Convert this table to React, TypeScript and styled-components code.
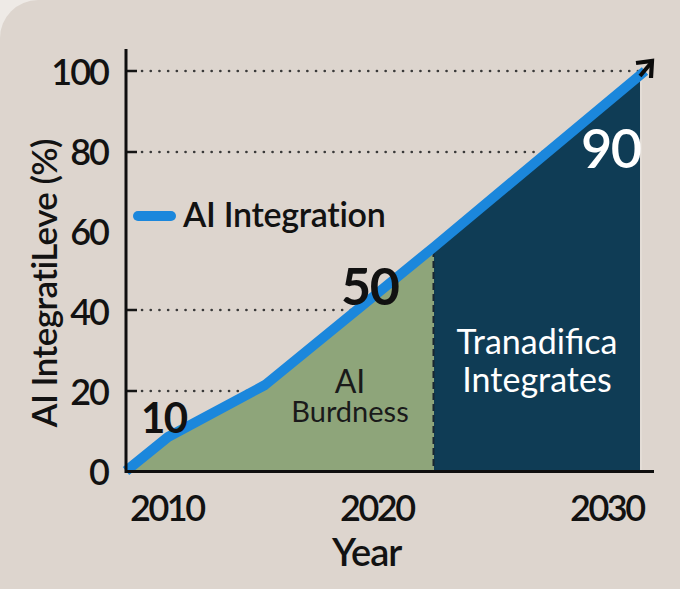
import React from "react";
import styled, { createGlobalStyle } from "styled-components";

const Global = createGlobalStyle`
  html, body { margin: 0; padding: 0; background: #eeeae6; }
  body { font-family: Lato, "Open Sans", Arial, sans-serif; }
  #root { width: 680px; height: 589px; overflow: hidden; }
`;

const Panel = styled.div`
  width: 680px;
  height: 589px;
  background: #ddd5ce;
  border-top-left-radius: 38px;
  padding-top: 40px;
  box-sizing: border-box;
  color: #121212;
  font-family: Lato, "Open Sans", Arial, sans-serif;
`;

const ChartRow = styled.div`
  display: flex;
  height: 449px;
`;

const TitleCol = styled.div`
  width: 54px;
  box-sizing: border-box;
  padding-left: 26px;
  padding-bottom: 62px;
  display: flex;
  align-items: flex-end;
`;

const YTitle = styled.div`
  writing-mode: vertical-rl;
  transform: rotate(180deg);
  font-size: 35px;
  line-height: 35px;
  font-weight: 600;
  letter-spacing: -0.6px;
  white-space: nowrap;
`;

const TickCol = styled.div`
  width: 56px;
  padding-top: 11px;
  margin-right: 16px;
  display: flex;
  flex-direction: column;
  align-items: flex-end;
  gap: 40px;
`;

const Tick = styled.div`
  height: 40px;
  line-height: 40px;
  font-size: 36px;
  font-weight: 600;
  letter-spacing: -2px;
  padding-right: 2px;
`;

const Plot = styled.div`
  position: relative;
  width: 554px;
  height: 449px;
`;

const PlotSvg = styled.svg`
  position: absolute;
  left: 0;
  top: 0;
  overflow: visible;
`;

const Annot = styled.div<{ $x: number; $y: number }>`
  position: absolute;
  left: ${(p) => p.$x}px;
  top: ${(p) => p.$y}px;
  white-space: nowrap;
`;

const Legend = styled(Annot)`
  display: flex;
  align-items: center;
  gap: 7px;
`;

const Pill = styled.span`
  width: 43px;
  height: 10px;
  border-radius: 5px;
  background: #1b87dc;
  margin-top: 3px;
`;

const LegendText = styled.span`
  font-size: 34px;
  line-height: 34px;
  font-weight: 600;
  letter-spacing: -0.3px;
`;

const BigNum = styled(Annot)<{ $size: number; $light?: boolean }>`
  font-size: ${(p) => p.$size}px;
  line-height: 1;
  font-weight: ${(p) => (p.$light ? 600 : 700)};
  letter-spacing: -1.5px;
  color: ${(p) => (p.$light ? "#ffffff" : "#111111")};
`;

const AreaLabel = styled(Annot)<{ $w: number; $light?: boolean }>`
  width: ${(p) => p.$w}px;
  text-align: center;
  color: ${(p) => (p.$light ? "#ffffff" : "#1a1a1a")};
  font-weight: 400;
`;

const Line = styled.div<{ $size: number; $lh: number }>`
  font-size: ${(p) => p.$size}px;
  line-height: ${(p) => p.$lh}px;
`;

const XRow = styled.div`
  display: grid;
  grid-template-columns: 210px 230px 1fr;
  padding-left: 130px;
  height: 40px;
`;

const XLabel = styled.div`
  font-size: 36px;
  line-height: 36px;
  font-weight: 600;
  letter-spacing: -2.5px;
`;

const YearRow = styled.div`
  padding-left: 332px;
  margin-top: 3px;
`;

const YearLabel = styled.div`
  font-size: 38px;
  line-height: 38px;
  font-weight: 600;
  letter-spacing: -1px;
`;

const ticks = ["100", "80", "60", "40", "20", "0"];
const grid = [71, 152, 310, 391];

export default function App() {
  return (
    <>
      <Global />
      <Panel>
        <ChartRow>
          <TitleCol>
            <YTitle>AI IntegratiLeve (%)</YTitle>
          </TitleCol>
          <TickCol>
            {ticks.map((t) => (
              <Tick key={t}>{t}</Tick>
            ))}
          </TickCol>
          <Plot>
            <PlotSvg width="554" height="449" viewBox="0 0 554 449">
              <g transform="translate(-126,-40)">
                {grid.map((y) => (
                  <g key={y}>
                    <line x1="126" y1={y} x2="137" y2={y} stroke="#151515" strokeWidth="2.5" />
                    <line
                      x1="142"
                      y1={y}
                      x2="640"
                      y2={y}
                      stroke="#3a3a3a"
                      strokeWidth="2.6"
                      strokeDasharray="0.1 8.6"
                      strokeLinecap="round"
                    />
                  </g>
                ))}
                <polygon points="126,471 168,437 265,385 434,247 434,472 126,472" fill="#8ea57a" />
                <polygon points="434,247 640,75 640,472 434,472" fill="#0f3c55" />
                <line x1="641" y1="76" x2="641" y2="471" stroke="#e8e2dc" strokeWidth="1.2" />
                <line
                  x1="433.5"
                  y1="250"
                  x2="433.5"
                  y2="471"
                  stroke="#1b2730"
                  strokeWidth="2"
                  strokeDasharray="7 4"
                />
                <polyline
                  points="126,471 168,437 265,385 434,247 645,71"
                  fill="none"
                  stroke="#1b87dc"
                  strokeWidth="10"
                  strokeLinejoin="round"
                />
                <line x1="640" y1="76" x2="651" y2="63" stroke="#0c0c0c" strokeWidth="4" />
                <polyline
                  points="636,63 652,61 651,78"
                  fill="none"
                  stroke="#0c0c0c"
                  strokeWidth="4.2"
                  strokeLinejoin="miter"
                />
                <line x1="126" y1="49" x2="126" y2="473" stroke="#0e0e0e" strokeWidth="3" />
                <line x1="125" y1="471.5" x2="654" y2="471.5" stroke="#0e0e0e" strokeWidth="3" />
              </g>
            </PlotSvg>
            <Legend $x={7} $y={157}>
              <Pill />
              <LegendText>AI Integration</LegendText>
            </Legend>
            <BigNum $x={15} $y={356} $size={42}>
              10
            </BigNum>
            <BigNum $x={215} $y={219} $size={52}>
              50
            </BigNum>
            <BigNum $x={455} $y={81} $size={54} $light>
              90
            </BigNum>
            <AreaLabel $x={144} $y={326} $w={160}>
              <Line $size={32} $lh={30}>AI</Line>
              <Line $size={29} $lh={30}>Burdness</Line>
            </AreaLabel>
            <AreaLabel $x={308} $y={282} $w={206} $light>
              <Line $size={34} $lh={38}>Tranadifica</Line>
              <Line $size={34} $lh={38}>Integrates</Line>
            </AreaLabel>
          </Plot>
        </ChartRow>
        <XRow>
          <XLabel>2010</XLabel>
          <XLabel>2020</XLabel>
          <XLabel>2030</XLabel>
        </XRow>
        <YearRow>
          <YearLabel>Year</YearLabel>
        </YearRow>
      </Panel>
    </>
  );
}
